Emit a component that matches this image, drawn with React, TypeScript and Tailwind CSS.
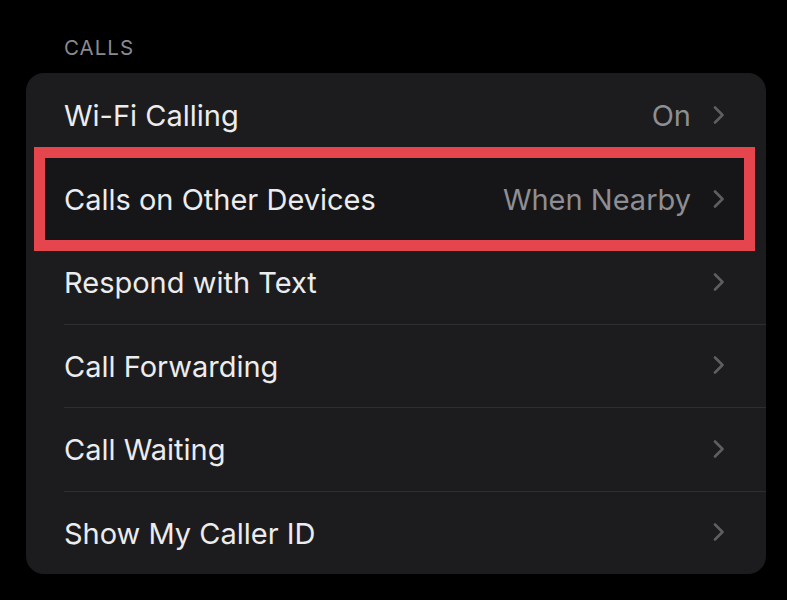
import React from "react";

const Chevron = () => (
  <svg width="12" height="20" viewBox="0 0 12 20" className="shrink-0">
    <path d="M3 2.5 L10.5 10 L3 17.5" fill="none" stroke="#5d5d62" strokeWidth="2.6" strokeLinecap="round" strokeLinejoin="round" />
  </svg>
);

type Row = { label: string; value?: string; highlight?: boolean };

const rows: Row[] = [
  { label: "Wi-Fi Calling", value: "On" },
  { label: "Calls on Other Devices", value: "When Nearby", highlight: true },
  { label: "Respond with Text" },
  { label: "Call Forwarding" },
  { label: "Call Waiting" },
  { label: "Show My Caller ID" },
];

export default function App() {
  return (
    <div
      className="w-[787px] h-[600px] bg-black overflow-hidden"
      style={{ fontFamily: "Inter, 'Noto Sans', sans-serif" }}
    >
      <div className="pt-[36px] pl-[64px] text-[20.5px] leading-[24px] text-[#8a8a8f] tracking-[1px]">CALLS</div>
      <div className="mt-[13px] ml-[26px] w-[740px] h-[501px] bg-[#1c1c1e] rounded-[18px] relative">
        {rows.map((r, i) => (
          <div key={r.label} className="h-[83.5px] relative flex items-center pl-[38px] pr-[42px]">
            {i > 0 && !r.highlight && !rows[i - 1].highlight && (
              <div className="absolute top-0 left-[38px] right-0 h-px bg-[#2e2e31]" />
            )}
            <span className="flex-1 text-[29px] text-[#ececee] pt-[2px]">{r.label}</span>
            {r.value && <span className="text-[29px] text-[#8e8e93] mr-[21px] pt-[2px]">{r.value}</span>}
            <Chevron />
          </div>
        ))}
        <div className="absolute left-[8px] top-[74px] w-[721px] h-[104px] border-[11px] border-[#e5464e] bg-[#161618] flex items-center pl-[19px] pr-[20px]">
          <span className="flex-1 text-[29px] text-[#ececee] pt-[2px]">Calls on Other Devices</span>
          <span className="text-[29px] text-[#8e8e93] mr-[21px] pt-[2px]">When Nearby</span>
          <Chevron />
        </div>
      </div>
    </div>
  );
}
